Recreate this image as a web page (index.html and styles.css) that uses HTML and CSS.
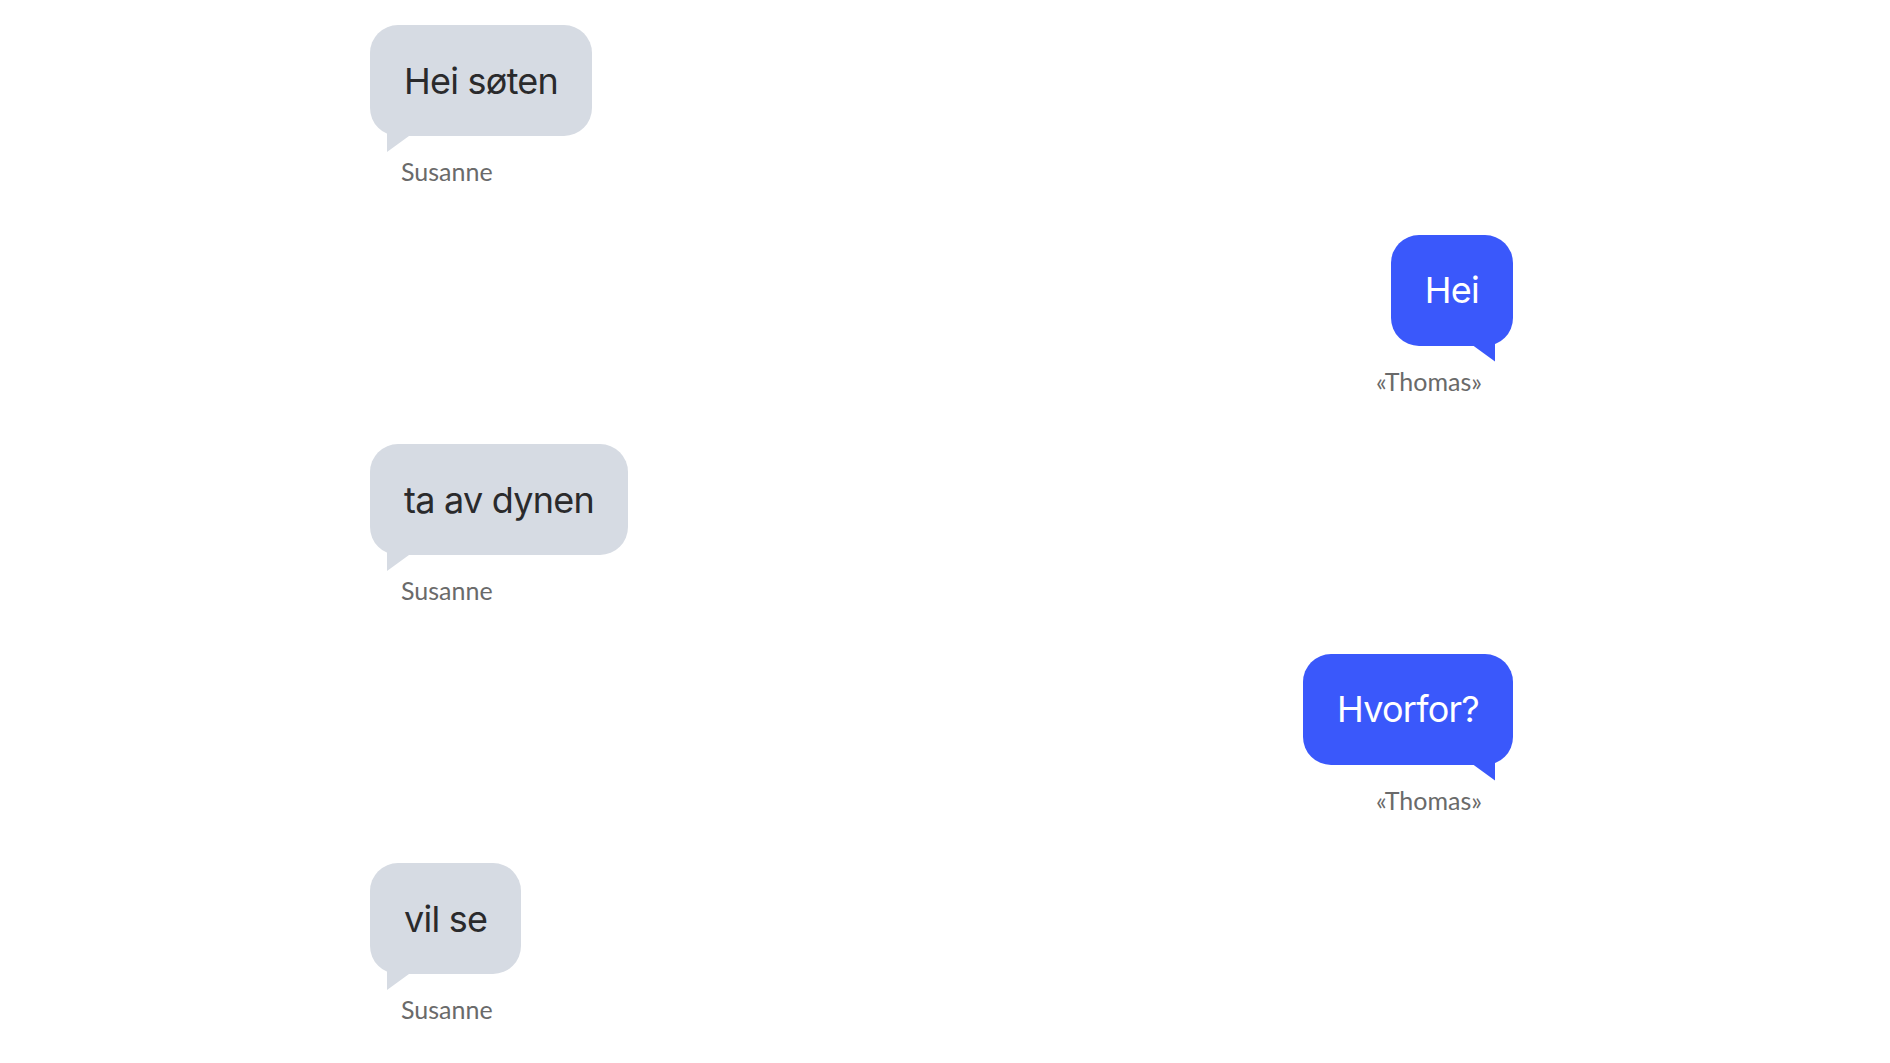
FILE: index.html
```html
<!DOCTYPE html>
<html lang="no">
<head>
<meta charset="utf-8">
<title>Chat</title>
<link rel="stylesheet" href="styles.css">
</head>
<body>
<main class="chat">
  <div class="msg msg-in">
    <div class="bubble">Hei søten</div>
    <div class="name">Susanne</div>
  </div>
  <div class="msg msg-out">
    <div class="bubble">Hei</div>
    <div class="name">«Thomas»</div>
  </div>
  <div class="msg msg-in">
    <div class="bubble">ta av dynen</div>
    <div class="name">Susanne</div>
  </div>
  <div class="msg msg-out">
    <div class="bubble">Hvorfor?</div>
    <div class="name">«Thomas»</div>
  </div>
  <div class="msg msg-in">
    <div class="bubble">vil se</div>
    <div class="name">Susanne</div>
  </div>
</main>
</body>
</html>
```

FILE: styles.css
```css
html, body {
  margin: 0;
  padding: 0;
  background: #ffffff;
}

body {
  font-family: Inter, "Open Sans", "Liberation Sans", sans-serif;
}

.chat {
  width: 1143px;
  margin-left: 370px;
  padding-top: 25px;
  display: flex;
  flex-direction: column;
  gap: 48.5px;
}

.msg {
  display: flex;
  flex-direction: column;
}

.msg-in {
  align-items: flex-start;
}

.msg-out {
  align-items: flex-end;
}

.bubble {
  position: relative;
  height: 111px;
  box-sizing: border-box;
  padding: 0 34px;
  display: flex;
  align-items: center;
  border-radius: 28px;
  font-size: 36px;
  letter-spacing: -0.75px;
  white-space: nowrap;
}

.msg-in .bubble {
  background: #d6dbe3;
  color: #2a2a2c;
}

.msg-out .bubble {
  background: #3a58fb;
  color: #ffffff;
}

.bubble::after {
  content: "";
  position: absolute;
  top: 95px;
  width: 22px;
  height: 32px;
  background: inherit;
  border-radius: 0;
}

.msg-in .bubble::after {
  left: 17px;
  clip-path: polygon(0 0, 100% 0, 100% 16px, 0 100%);
}

.msg-out .bubble::after {
  right: 18px;
  clip-path: polygon(0 0, 100% 0, 100% 100%, 0 16px);
}

.name {
  margin-top: 20px;
  font-family: Lato, Inter, "Liberation Sans", sans-serif;
  font-size: 25px;
  line-height: 30px;
  color: #6a6a6a;
}

.msg-in .name {
  margin-left: 31px;
}

.msg-out .name {
  margin-right: 31px;
}
```
